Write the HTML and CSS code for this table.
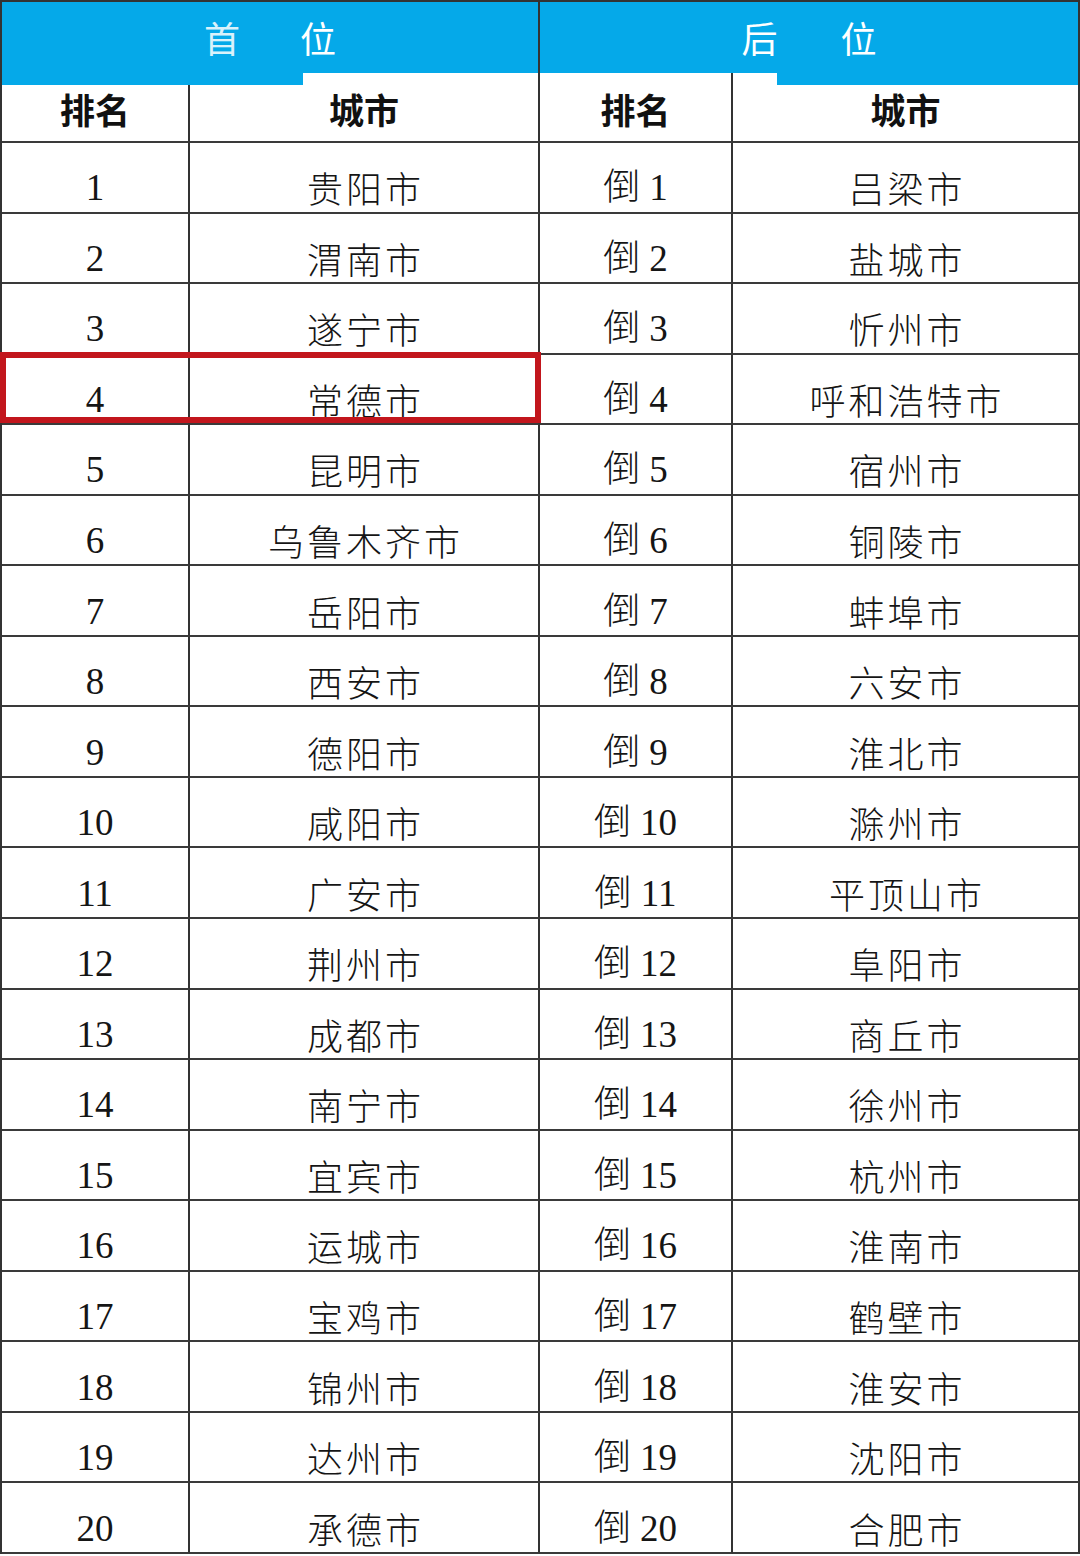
FILE: index.html
```html
<!DOCTYPE html>
<html lang="zh-CN">
<head>
<meta charset="utf-8">
<title>城市排名</title>
<link rel="stylesheet" href="styles.css">
</head>
<body>
<div class="sheet">
  <div class="banner banner-left"><span>首</span><span>位</span></div>
  <div class="banner banner-right"><span>后</span><span>位</span></div>

  <div class="strip strip-1"></div>
  <div class="strip strip-2"></div>
  <div class="strip strip-3"></div>
  <div class="strip strip-4"></div>

  <div class="cell head">排名</div>
  <div class="cell head">城市</div>
  <div class="cell head">排名</div>
  <div class="cell head">城市</div>

  <div class="cell num">1</div><div class="cell city">贵阳市</div><div class="cell num">倒 1</div><div class="cell city">吕梁市</div>
  <div class="cell num">2</div><div class="cell city">渭南市</div><div class="cell num">倒 2</div><div class="cell city">盐城市</div>
  <div class="cell num">3</div><div class="cell city">遂宁市</div><div class="cell num">倒 3</div><div class="cell city">忻州市</div>
  <div class="cell num marked">4</div><div class="cell city">常德市</div><div class="cell num">倒 4</div><div class="cell city">呼和浩特市</div>
  <div class="cell num">5</div><div class="cell city">昆明市</div><div class="cell num">倒 5</div><div class="cell city">宿州市</div>
  <div class="cell num">6</div><div class="cell city">乌鲁木齐市</div><div class="cell num">倒 6</div><div class="cell city">铜陵市</div>
  <div class="cell num">7</div><div class="cell city">岳阳市</div><div class="cell num">倒 7</div><div class="cell city">蚌埠市</div>
  <div class="cell num">8</div><div class="cell city">西安市</div><div class="cell num">倒 8</div><div class="cell city">六安市</div>
  <div class="cell num">9</div><div class="cell city">德阳市</div><div class="cell num">倒 9</div><div class="cell city">淮北市</div>
  <div class="cell num">10</div><div class="cell city">咸阳市</div><div class="cell num">倒 10</div><div class="cell city">滁州市</div>
  <div class="cell num">11</div><div class="cell city">广安市</div><div class="cell num">倒 11</div><div class="cell city">平顶山市</div>
  <div class="cell num">12</div><div class="cell city">荆州市</div><div class="cell num">倒 12</div><div class="cell city">阜阳市</div>
  <div class="cell num">13</div><div class="cell city">成都市</div><div class="cell num">倒 13</div><div class="cell city">商丘市</div>
  <div class="cell num">14</div><div class="cell city">南宁市</div><div class="cell num">倒 14</div><div class="cell city">徐州市</div>
  <div class="cell num">15</div><div class="cell city">宜宾市</div><div class="cell num">倒 15</div><div class="cell city">杭州市</div>
  <div class="cell num">16</div><div class="cell city">运城市</div><div class="cell num">倒 16</div><div class="cell city">淮南市</div>
  <div class="cell num">17</div><div class="cell city">宝鸡市</div><div class="cell num">倒 17</div><div class="cell city">鹤壁市</div>
  <div class="cell num">18</div><div class="cell city">锦州市</div><div class="cell num">倒 18</div><div class="cell city">淮安市</div>
  <div class="cell num">19</div><div class="cell city">达州市</div><div class="cell num">倒 19</div><div class="cell city">沈阳市</div>
  <div class="cell num">20</div><div class="cell city">承德市</div><div class="cell num">倒 20</div><div class="cell city">合肥市</div>
</div>
</body>
</html>
```

FILE: styles.css
```css
html, body {
  margin: 0;
  padding: 0;
  background: #ffffff;
}

.sheet {
  width: 1080px;
  box-sizing: border-box;
  border-left: 2px solid #333333;
  display: grid;
  grid-template-columns: 188px 350px 193px 347px;
  grid-template-rows: 73px 12px 58px repeat(20, 70.55px);
  font-family: "Liberation Serif", "Noto Sans CJK SC", serif;
  color: #151515;
}

.banner {
  background: #05a9e9;
  color: #ffffff;
  font-family: "Noto Sans CJK SC", sans-serif;
  font-size: 36px;
  display: flex;
  align-items: center;
  justify-content: center;
  box-sizing: border-box;
  border-top: 2px solid #333333;
  padding-bottom: 2px;
}

.banner-left {
  grid-column: 1 / 3;
  gap: 60px;
  border-right: 2px solid #333333;
}

.banner-left span:first-child {
  opacity: 0.85;
}

.banner-right {
  grid-column: 3 / 5;
  gap: 63px;
  border-right: 2px solid #333333;
}

.strip {
  box-sizing: border-box;
}

.strip-1 {
  background: #05a9e9;
}

.strip-2 {
  background: linear-gradient(to right, #05a9e9 0, #05a9e9 113px, #ffffff 113px);
  border-right: 2px solid #333333;
}

.strip-3 {
  background: #ffffff;
  border-right: 2px solid #333333;
}

.strip-4 {
  background: linear-gradient(to right, #ffffff 0, #ffffff 44px, #05a9e9 44px);
  background-clip: content-box;
  border-right: 2px solid #333333;
}

.cell {
  box-sizing: border-box;
  border-right: 2px solid #333333;
  border-bottom: 2px solid #3a3a3a;
  display: flex;
  align-items: center;
  justify-content: center;
  white-space: pre;
}

.head {
  font-family: "Noto Sans CJK SC", sans-serif;
  font-weight: 700;
  font-size: 35px;
  color: #111111;
  padding-bottom: 10px;
}

.num {
  font-size: 37px;
  font-weight: 300;
  line-height: 40px;
  padding-top: 22px;
}

.city {
  font-family: "Noto Sans CJK SC", sans-serif;
  font-size: 36px;
  font-weight: 300;
  line-height: 40px;
  letter-spacing: 3px;
  padding-top: 20px;
  padding-left: 3px;
}

.marked {
  position: relative;
}

.marked::after {
  content: "";
  position: absolute;
  top: -3px;
  left: -2px;
  width: 541px;
  height: 71px;
  box-sizing: border-box;
  border: 6px solid #c2161d;
  z-index: 1;
}
```
